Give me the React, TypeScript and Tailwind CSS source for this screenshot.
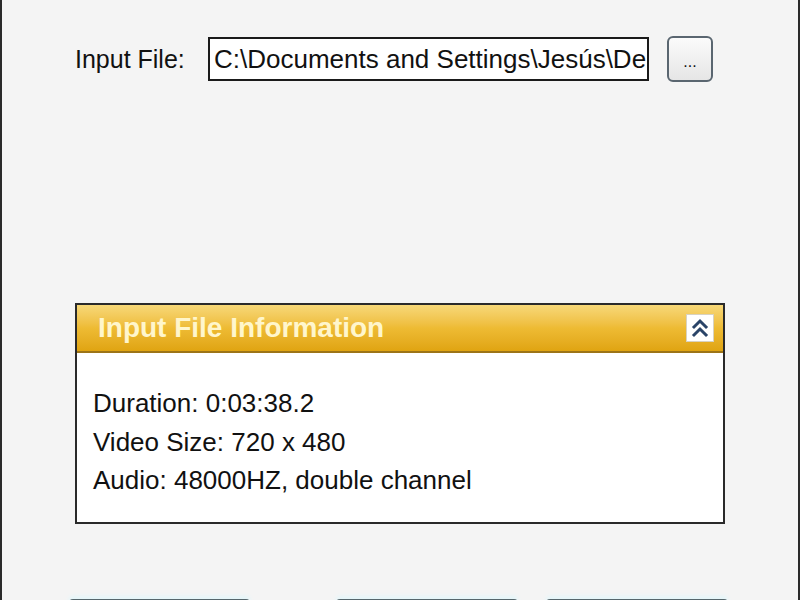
export default function App() {
  const font = { fontFamily: "'Liberation Sans', Arial, sans-serif" };
  return (
    <div
      className="w-[800px] h-[600px] overflow-hidden bg-[#f4f4f4] border-l-2 border-r-2 border-[#2a2a2a] flex flex-col text-[#111]"
      style={font}
    >
      {/* input file row */}
      <div className="flex items-center pt-[36px] pl-[73px]">
        <span className="text-[25px] leading-none w-[133px]">Input File:</span>
        <div className="w-[441px] h-[44px] bg-white border-2 border-[#1a1a1a] flex items-center pl-[4px] overflow-hidden">
          <span className="text-[26px] leading-none whitespace-nowrap">C:\Documents and Settings\Jesús\De</span>
        </div>
        <button className="ml-[18px] w-[46px] h-[46px] rounded-[6px] border-2 border-[#5a6670] bg-gradient-to-b from-[#fbfbfb] to-[#e6e6e6] flex items-center justify-center pt-[6px] text-[16px] leading-none">
          ...
        </button>
      </div>

      {/* info panel */}
      <div className="mt-[221px] ml-[73px] w-[650px] border-2 border-[#2a2a2a] bg-white">
        <div className="h-[48px] bg-gradient-to-b from-[#f7d877] via-[#eebb33] to-[#e0a410] border-b-2 border-[#9c7418] flex items-center justify-between pl-[21px] pr-[9px]">
          <span className="text-[28px] font-bold text-[#fff6cc] leading-none">Input File Information</span>
          <div className="w-[28px] h-[28px] bg-white border border-[#d8d2c0] flex items-center justify-center">
            <svg width="18" height="20" viewBox="0 0 18 20" fill="none" stroke="#2a4468" strokeWidth="3" strokeLinecap="square">
              <path d="M3 9 L9 3 L15 9" />
              <path d="M3 17 L9 11 L15 17" />
            </svg>
          </div>
        </div>
        <div className="pt-[31px] pb-[22px] pl-[16px] text-[26px] leading-[38.5px]">
          <div>Duration: 0:03:38.2</div>
          <div>Video Size: 720 x 480</div>
          <div>Audio: 48000HZ, double channel</div>
        </div>
      </div>

      {/* bottom buttons (cut off) */}
      <div className="mt-[75px] flex pl-[67px]">
        <div className="w-[181px] h-[30px] rounded-t-[4px] border-2 border-[#56666c] bg-[#eef6f8] shadow-[0_-3px_4px_#e4f6fa]" />
        <div className="ml-[86px] w-[182px] h-[30px] rounded-t-[4px] border-2 border-[#56666c] bg-[#eef6f8] shadow-[0_-3px_4px_#e4f6fa]" />
        <div className="ml-[28px] w-[182px] h-[30px] rounded-t-[4px] border-2 border-[#56666c] bg-[#eef6f8] shadow-[0_-3px_4px_#e4f6fa]" />
      </div>
    </div>
  );
}
